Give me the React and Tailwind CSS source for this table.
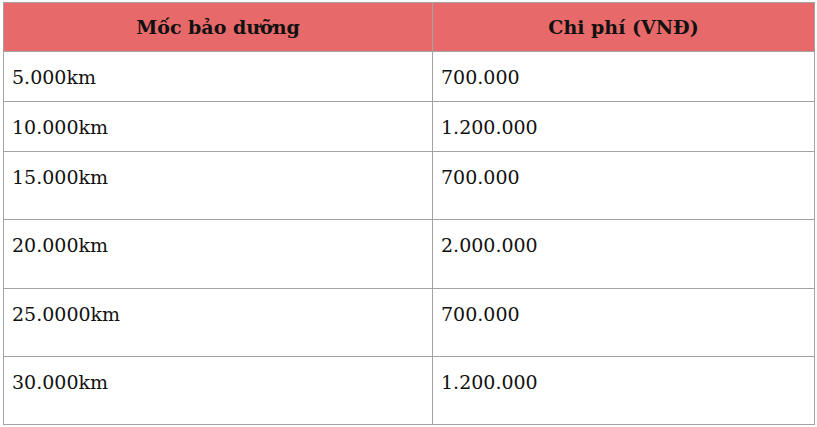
export default function App() {
  const rows = [
    ["5.000km", "700.000", "h-[50px]"],
    ["10.000km", "1.200.000", "h-[50px]"],
    ["15.000km", "700.000", "h-[68px]"],
    ["20.000km", "2.000.000", "h-[69px]"],
    ["25.0000km", "700.000", "h-[68px]"],
    ["30.000km", "1.200.000", "h-[68px]"],
  ];
  return (
    <div className="w-[817px] h-[427px] bg-white pl-[3px] pt-[2px] font-['DejaVu_Serif',serif] text-[#111]">
      <table className="border-collapse w-[811px] table-fixed">
        <colgroup>
          <col className="w-[429px]" />
          <col className="w-[382px]" />
        </colgroup>
        <thead>
          <tr className="h-[49px] bg-[#e76969]">
            <th className="border border-[#a3a3a3] text-center align-middle font-bold text-[19px] leading-[28px]">Mốc bảo dưỡng</th>
            <th className="border border-[#a3a3a3] text-center align-middle font-bold text-[19px] leading-[28px]">Chi phí (VNĐ)</th>
          </tr>
        </thead>
        <tbody>
          {rows.map(([a, b, h], i) => (
            <tr key={i} className={h}>
              <td className="border border-[#a3a3a3] align-top pl-[8px] pt-[11px] text-[19px] leading-[28px]">{a}</td>
              <td className="border border-[#a3a3a3] align-top pl-[8px] pt-[11px] text-[19px] leading-[28px]">{b}</td>
            </tr>
          ))}
        </tbody>
      </table>
    </div>
  );
}
